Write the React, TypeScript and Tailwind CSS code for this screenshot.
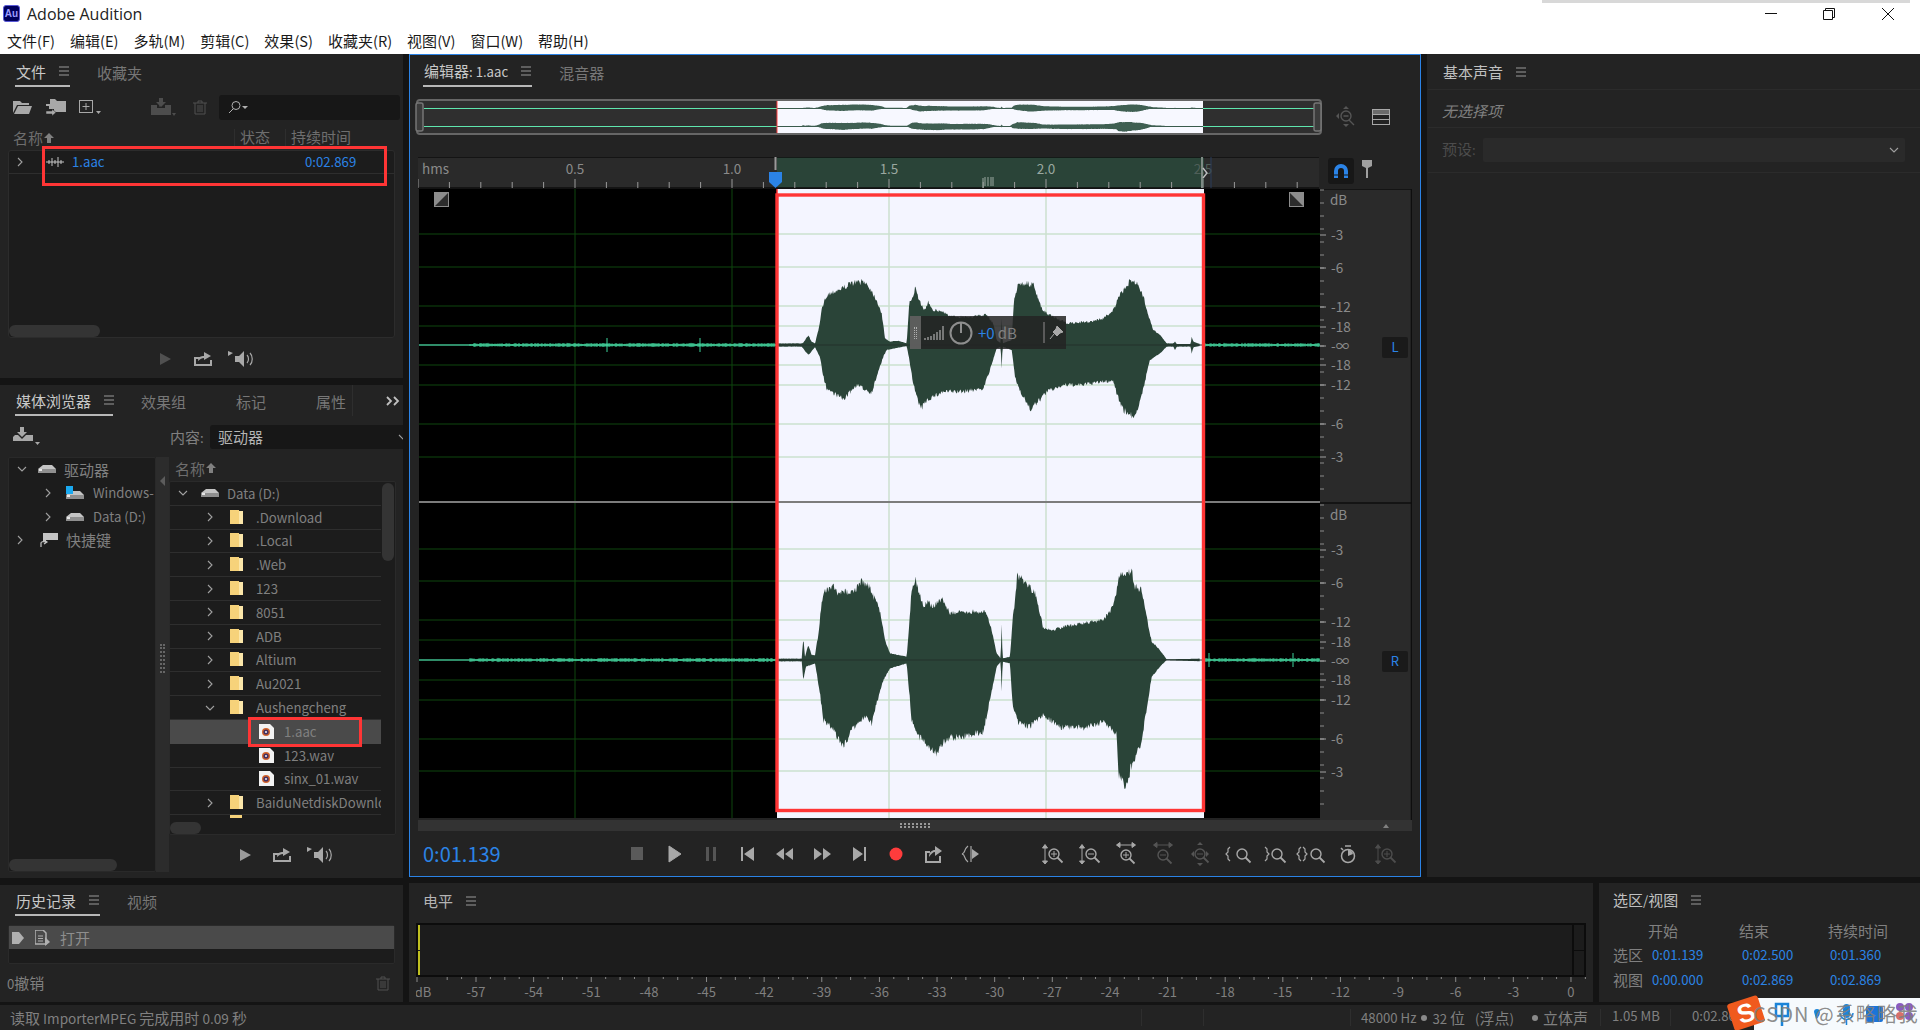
import type { ReactNode } from "react";

const BLUE = "text-[#2b83e6] text-[13.2px]";

// envelope points read off the screenshot: [x, y] in px of the zoomed crop
const ch1Top = [[25,250],[95,250],[100,248],[115,226],[125,245],[135,250],[148,200],[155,150],[170,105],[190,95],[215,85],[250,68],[285,65],[300,85],[320,120],[335,160],[345,235],[360,245],[385,242],[410,250],[418,130],[430,105],[437,80],[445,120],[465,150],[475,125],[490,150],[520,155],[540,170],[600,170],[650,165],[670,190],[680,240],[692,250],[695,175],[698,250],[725,240],[732,125],[745,70],[770,70],[790,75],[805,120],[820,155],[830,160],[890,190],[960,185],[1000,175],[1030,150],[1050,105],[1085,58],[1100,70],[1120,110],[1140,180],[1150,210],[1170,225],[1190,250],[1210,250],[1215,245],[1220,252],[1262,252],[1265,230],[1270,245],[1290,252]];
const ch1Bot = [[25,260],[95,260],[115,285],[135,262],[150,290],[160,350],[170,385],[220,418],[260,375],[305,398],[320,350],[340,290],[350,270],[410,258],[418,300],[430,370],[445,430],[455,445],[470,420],[520,395],[580,395],[640,385],[660,330],[680,265],[692,260],[695,325],[698,260],[725,270],[735,350],[745,380],[780,448],[800,430],[830,395],[880,375],[930,375],[1000,365],[1030,362],[1040,400],[1060,450],[1090,470],[1110,430],[1130,340],[1140,300],[1170,280],[1190,260],[1210,260],[1215,270],[1220,260],[1262,260],[1265,280],[1270,262],[1290,258]];
const ch2Top = [[25,296],[95,296],[100,235],[105,290],[115,255],[125,285],[135,285],[147,210],[155,120],[165,95],[190,80],[205,105],[220,95],[250,95],[275,65],[300,80],[310,110],[325,135],[335,180],[345,240],[360,280],[410,290],[418,190],[425,85],[437,55],[445,90],[460,140],[470,125],[490,140],[515,115],[540,160],[600,155],[645,155],[660,190],[680,280],[692,295],[695,195],[698,295],[720,290],[728,175],[735,125],[742,45],[770,70],[795,100],[810,160],[820,205],[850,210],[880,200],[940,190],[1000,180],[1030,140],[1050,40],[1085,35],[1095,80],[1115,90],[1130,170],[1145,245],[1170,270],[1190,298],[1290,296]];
const ch2Bot = [[25,304],[95,304],[100,360],[108,320],[135,310],[150,400],[160,480],[190,510],[220,560],[245,510],[290,465],[305,490],[320,430],[340,360],[360,325],[410,310],[418,400],[425,480],[445,530],[480,560],[500,580],[530,535],[580,530],[640,515],[660,420],[680,320],[692,305],[695,395],[698,305],[720,310],[728,440],[745,490],[780,500],[820,465],[870,500],[940,505],[1000,485],[1040,520],[1045,640],[1065,680],[1090,600],[1110,560],[1130,450],[1145,350],[1170,320],[1190,300],[1290,304]];

function at(env: number[][], x: number) {
  for (let i = 1; i < env.length; i++) {
    if (x <= env[i][0]) {
      const [x0, y0] = env[i - 1];
      const [x1, y1] = env[i];
      return y0 + ((y1 - y0) * (x - x0)) / (x1 - x0);
    }
  }
  return env[env.length - 1][1];
}

let seed = 7;
const rnd = () => {
  seed = (seed * 16807) % 2147483647;
  return seed / 2147483647;
};

// upper edge left to right, lower edge back, in screen px
function wavePath(top: number[][], bot: number[][], y0: number, mid: number, scale: number, dest: number) {
  const a: string[] = [];
  const b: string[] = [];
  for (let X = 25; X <= 1290; X += 2) {
    const x = 770 + X / 3;
    const t = y0 + at(top, X) / 3;
    const u = y0 + at(bot, X) / 3;
    const jt = (mid - t) * 0.1 * (rnd() - 0.5);
    const ju = (u - mid) * 0.1 * (rnd() - 0.5);
    a.push(`${x.toFixed(1)},${(dest + (t + jt - mid) * scale).toFixed(1)}`);
    b.unshift(`${x.toFixed(1)},${(dest + (u + ju - mid) * scale).toFixed(1)}`);
  }
  return "M" + a.concat(b).join("L") + "Z";
}

const wave1 = wavePath(ch1Top, ch1Bot, 260, 345, 1, 345);
const wave2 = wavePath(ch2Top, ch2Bot, 560, 660, 1, 660);
const over1 = wavePath(ch1Top, ch1Bot, 260, 345, 0.055, 108);
const over2 = wavePath(ch2Top, ch2Bot, 560, 660, 0.045, 126);

function noise(from: number, to: number, mid: number, spikes: number[]) {
  let d = "";
  for (let x = from; x < to; x++) {
    const h = x < 470 ? 0.3 : 0.6 + rnd() * 1.5;
    d += `M${x} ${(mid - h).toFixed(1)}V${(mid + h).toFixed(1)}`;
  }
  spikes.forEach((x) => {
    d += `M${x} ${mid - 7}V${mid + 7}`;
  });
  return d;
}

// the Latin glyphs of the CJK face run wide next to the 15px ideographs
function T({ s, size = "text-[13.2px]" }: { s: string; size?: string }) {
  return (
    <>
      {s.split(/([\x00-\x7f]+)/).map((part, i) =>
        i % 2 === 1 ? (
          <span key={i} className={size}>{part}</span>
        ) : (
          part
        )
      )}
    </>
  );
}

function Lines() {
  return (
    <svg viewBox="0 0 10 10" className="w-[10px] h-[10px] shrink-0">
      <path d="M0 1H10M0 5H10M0 9H10" stroke="#9a9a9a" strokeWidth="1.2" />
    </svg>
  );
}

function Tab({ label, active, w, children }: { label: string; active?: boolean; w?: string; children?: ReactNode }) {
  return (
    <div className={`h-[33px] pt-[3px] flex items-center gap-[13px] whitespace-nowrap ${active ? "border-b-2 border-[#b8b8b8] text-[#c8c8c8] px-[1px]" : "text-[#777777]"} ${w ?? ""}`}>
      <span><T s={label} /></span>
      {children}
    </div>
  );
}

function Chev({ down, className }: { down?: boolean; className?: string }) {
  return (
    <svg viewBox="0 0 10 10" className={`w-[10px] h-[10px] shrink-0 ${className ?? ""}`}>
      <path d={down ? "M1 3L5 7L9 3" : "M3 1L7 5L3 9"} fill="none" stroke="#a0a0a0" strokeWidth="1.1" />
    </svg>
  );
}

function Play({ dim }: { dim?: boolean }) {
  return (
    <svg viewBox="0 0 14 14" className="w-[14px] h-[14px]">
      <path d="M2 1L13 7L2 13Z" fill={dim ? "#505050" : "#9a9a9a"} />
    </svg>
  );
}

function LoopIcon() {
  return (
    <svg viewBox="0 0 20 16" className="w-[20px] h-[16px]">
      <path d="M1 6H7V8H3V13H17V9H19V15H1Z" fill="#a8a8a8" />
      <path d="M5 10C5 6 8 5 11 5V1L18 5L11 9V7C9 7 7 8 5 10Z" fill="#a8a8a8" />
    </svg>
  );
}

function SpeakerIcon() {
  return (
    <svg viewBox="0 0 26 18" className="w-[26px] h-[18px]">
      <path d="M0 1L5 3L0 6Z" fill="#a8a8a8" />
      <path d="M7 6H11L16 1V17L11 12H7Z" fill="#a8a8a8" />
      <path d="M19 5C21 7 21 11 19 13M22 3C25 6 25 12 22 15" fill="none" stroke="#a8a8a8" strokeWidth="1.2" />
    </svg>
  );
}

function Trash({ dim }: { dim?: boolean }) {
  const c = dim ? "#505050" : "#777777";
  return (
    <svg viewBox="0 0 14 15" className="w-[14px] h-[15px]">
      <path d="M0 3H14M5 3V1H9V3M2 3V14H12V3M5 5V12M7 5V12M9 5V12" fill="none" stroke={c} strokeWidth="1" />
    </svg>
  );
}

function Drive() {
  return (
    <svg viewBox="0 0 18 10" className="w-[18px] h-[10px] shrink-0">
      <path d="M5 1H14L18 5V8H0V5Z" fill="#c4c4c4" />
      <path d="M0 5H18V9H0Z" fill="#8f8f8f" />
      <rect x="1" y="5" width="3" height="2" fill="#e6e6e6" />
    </svg>
  );
}

function Folder() {
  return (
    <svg viewBox="0 0 14 15" className="w-[14px] h-[15px] shrink-0">
      <path d="M0 0H9L10 13L13 14H0Z" fill="#f6d27a" />
      <path d="M9 1H13V14H9Z" fill="#fbe6a9" />
    </svg>
  );
}

function AudioFile() {
  return (
    <svg viewBox="0 0 15 15" className="w-[15px] h-[15px] shrink-0">
      <path d="M0 0H11L15 4V15H0Z" fill="#f2f2f2" />
      <circle cx="7" cy="8" r="4" fill="#d2622a" />
      <circle cx="7" cy="8" r="2.6" fill="#433163" />
      <circle cx="7" cy="8" r="1" fill="#f2f2f2" />
    </svg>
  );
}

const browserRows = [
  { name: ".Download", kind: "folder" },
  { name: ".Local", kind: "folder" },
  { name: ".Web", kind: "folder" },
  { name: "123", kind: "folder" },
  { name: "8051", kind: "folder" },
  { name: "ADB", kind: "folder" },
  { name: "Altium", kind: "folder" },
  { name: "Au2021", kind: "folder" },
  { name: "Aushengcheng", kind: "open" },
  { name: "1.aac", kind: "file", selected: true },
  { name: "123.wav", kind: "file" },
  { name: "sinx_01.wav", kind: "file" },
  { name: "BaiduNetdiskDownload", kind: "folder" },
];

function FilesPanel() {
  return (
    <div className="relative h-[324px] bg-[#232323] flex flex-col">
      <div className="flex pl-[15px] gap-[27px]">
        <Tab label="文件" active><Lines /></Tab>
        <Tab label="收藏夹" />
      </div>
      <div className="h-[38px] pt-[2px] flex items-center pl-[13px] shrink-0">
        <svg viewBox="0 0 19 14" className="w-[19px] h-[14px]">
          <path d="M0 1H7L9 3H16V5H4L0 13ZM5 6H19L16 14H1Z" fill="#a8a8a8" />
        </svg>
        <svg viewBox="0 0 21 18" className="w-[21px] h-[18px] ml-[14px]">
          <path d="M4 1H9L11 3H20V14H8V11H3V8H0V6H4Z" fill="#a8a8a8" />
          <path d="M0 13H6V11L10 14.5L6 18V16H0Z" fill="#a8a8a8" stroke="#232323" strokeWidth="0.5" />
        </svg>
        <svg viewBox="0 0 22 16" className="w-[22px] h-[16px] ml-[12px]">
          <rect x="0.5" y="1.5" width="13" height="12" fill="none" stroke="#a8a8a8" />
          <path d="M7 4V11M3.5 7.5H10.5" stroke="#a8a8a8" />
          <path d="M17 12H22L19.5 15Z" fill="#a8a8a8" />
        </svg>
        <svg viewBox="0 0 25 18" className="w-[25px] h-[18px] ml-[50px]">
          <path d="M0 7H6V10H14V7H20V17H0Z M10 0V5H13L8 9" fill="#4d4d4d" />
          <path d="M8 0H12V4H15L10 9L5 4H8Z" fill="#4d4d4d" />
          <path d="M21 15H25L23 18Z" fill="#4d4d4d" />
        </svg>
        <div className="ml-[17px]"><Trash dim /></div>
        <div className="ml-[12px] w-[181px] h-[25px] bg-[#171717] rounded-[3px] flex items-center pl-[9px]">
          <svg viewBox="0 0 21 14" className="w-[21px] h-[14px]">
            <circle cx="8" cy="5.5" r="4" fill="none" stroke="#b0b0b0" />
            <path d="M5 9L1 13" stroke="#b0b0b0" />
            <path d="M14 6H20L17 9Z" fill="#b0b0b0" />
          </svg>
        </div>
      </div>
      <div className="h-[25px] mx-[8px] flex items-center text-[#6e6e6e] shrink-0">
        <div className="w-[226px] pl-[5px] flex items-center gap-[1px]">
          名称
          <svg viewBox="0 0 10 10" className="w-[10px] h-[10px]"><path d="M5 0L10 5H7V10H3V5H0Z" fill="#808080" /></svg>
        </div>
        <div className="w-[51px] h-[17px] pl-[5px] border-l border-[#2e2e2e]">状态</div>
        <div className="h-[17px] pl-[5px] border-l border-[#2e2e2e]">持续时间</div>
      </div>
      <div className="mx-[8px] h-[188px] bg-[#1c1c1c] border border-[#2c2c2c] rounded-[3px] flex flex-col shrink-0">
        <div className="h-[23px] flex items-center border-b border-[#2e2e2e] shrink-0">
          <Chev className="ml-[6px]" />
          <svg viewBox="0 0 18 10" className="w-[18px] h-[10px] ml-[21px]">
            <path d="M0 5H18M3 3V7M6 1V9M9 3V7M12 0V10M15 3V7" stroke="#c4c4c4" />
          </svg>
          <span className={`ml-[8px] w-[233px] ${BLUE}`}>1.aac</span>
          <span className={BLUE}>0:02.869</span>
        </div>
        <div className="mt-auto h-[12px] w-[91px] bg-[#343434] rounded-full" />
      </div>
      <div className="flex-1 pt-[1px] flex items-center">
        <div className="ml-[158px]"><Play dim /></div>
        <div className="ml-[21px]"><LoopIcon /></div>
        <div className="ml-[15px]"><SpeakerIcon /></div>
      </div>
      <div className="absolute left-[42px] top-[92px] w-[345px] h-[40px] border-[3px] border-[#ff3535]" />
    </div>
  );
}

function MediaPanel() {
  return (
    <div className="relative h-[493px] bg-[#232323] flex flex-col overflow-hidden">
      <div className="-mt-[2px] flex pl-[15px]">
        <Tab label="媒体浏览器" active w="w-[98px]"><Lines /></Tab>
        <Tab label="效果组" w="ml-[28px] w-[95px]" />
        <Tab label="标记" w="w-[80px]" />
        <Tab label="属性" w="w-[37px] border-r border-[#2e2e2e]" />
        <div className="h-[33px] pt-[3px] flex items-center ml-[33px]">
          <svg viewBox="0 0 14 10" className="w-[14px] h-[10px]">
            <path d="M1 1L5 5L1 9M8 1L12 5L8 9" fill="none" stroke="#c0c0c0" strokeWidth="1.8" />
          </svg>
        </div>
      </div>
      <div className="mt-[2px] h-[39px] pb-[2px] flex items-center pl-[13px] shrink-0">
        <svg viewBox="0 0 28 20" className="w-[28px] h-[20px] shrink-0">
          <path d="M7 0H11V5H14L9 10L4 5H7Z" fill="#a8a8a8" />
          <path d="M2 8H5L9 12L13 8H20V14H0V10Z" fill="#a8a8a8" />
          <path d="M22 15H27L24.5 18Z" fill="#a8a8a8" />
        </svg>
        <span className="ml-[129px] w-[33px] text-[#808080] whitespace-nowrap shrink-0"><T s="内容:" /></span>
        <div className="ml-[7px] w-[205px] h-[24px] bg-[#171717] rounded-[3px] flex items-center pl-[8px] text-[#b4b4b4] shrink-0">
          驱动器
          <Chev down className="ml-[135px]" />
        </div>
      </div>
      <div className="flex h-[415px]">
        <div className="ml-[8px] w-[148px] bg-[#1c1c1c] border border-[#292929] rounded-[2px] flex flex-col text-[#808080] shrink-0">
          <div className="h-[24px] pb-[2px] flex items-center">
            <Chev down className="ml-[8px]" />
            <div className="ml-[11px]"><Drive /></div>
            <span className="ml-[8px]">驱动器</span>
          </div>
          <div className="h-[24px] pb-[2px] flex items-center">
            <Chev className="ml-[34px]" />
            <div className="relative ml-[13px] w-[18px] h-[14px] flex items-end shrink-0">
              <Drive />
              <div className="absolute left-0 top-0 w-[7px] h-[8px] bg-[#1aa9f0]" />
            </div>
            <span className="ml-[9px] whitespace-nowrap overflow-hidden w-[61px] text-[13.2px]">Windows-SSD</span>
          </div>
          <div className="h-[24px] pb-[2px] flex items-center">
            <Chev className="ml-[34px]" />
            <div className="ml-[13px]"><Drive /></div>
            <span className="ml-[9px] text-[13.2px]">Data (D:)</span>
          </div>
          <div className="h-[22px] pb-[3px] flex items-center">
            <Chev className="ml-[6px]" />
            <svg viewBox="0 0 18 16" className="w-[18px] h-[16px] ml-[15px]">
              <path d="M3 1H18V8H6V9H3Z" fill="#c4c4c4" />
              <path d="M1 15V11C1 10 3 9 6 10M4 8L7 10L4 12" fill="none" stroke="#c4c4c4" strokeWidth="1.2" />
            </svg>
            <span className="ml-[8px]">快捷键</span>
          </div>
          <div className="mt-auto h-[12px] w-[108px] bg-[#343434] rounded-full" />
        </div>
        <div className="w-[13px] bg-[#2c2c2c] flex flex-col items-center shrink-0">
          <svg viewBox="0 0 6 10" className="w-[6px] h-[10px] mt-[19px]"><path d="M5 0V10L0 5Z" fill="#5c5c5c" /></svg>
          <div className="mt-[158px] w-[5px] h-[29px] border-x-2 border-dotted border-[#666666]" />
        </div>
        <div className="w-[227px] flex flex-col shrink-0">
          <div className="h-[24px] pl-[6px] pb-[2px] flex items-center gap-[1px] text-[#6e6e6e] shrink-0">
            名称
            <svg viewBox="0 0 10 10" className="w-[10px] h-[10px]"><path d="M5 0L10 5H7V10H3V5H0Z" fill="#808080" /></svg>
          </div>
          <div className="h-[354px] bg-[#1c1c1c] border border-[#2a2a2a] rounded-[2px] flex flex-col overflow-hidden shrink-0">
            <div className="flex h-[340px]">
              <div className="w-[211px] overflow-hidden text-[#808080] text-[13.2px] shrink-0">
                <div className="h-[23.8px] flex items-center border-b border-[#2e2e2e]">
                  <Chev down className="ml-[8px]" />
                  <div className="ml-[13px]"><Drive /></div>
                  <span className="ml-[8px]">Data (D:)</span>
                </div>
                {browserRows.map((r) => (
                  <div key={r.name} className={`h-[23.8px] flex items-center border-b whitespace-nowrap overflow-hidden ${r.selected ? "bg-[#4a4a4a] border-[#4a4a4a]" : "border-[#2e2e2e]"}`}>
                    {r.kind === "file" ? (
                      <div className="ml-[89px] mr-[10px]"><AudioFile /></div>
                    ) : (
                      <>
                        <Chev down={r.kind === "open"} className="ml-[35px]" />
                        <div className="ml-[15px] mr-[12px]"><Folder /></div>
                      </>
                    )}
                    <span>{r.name}</span>
                  </div>
                ))}
                <div className="ml-[60px] w-[12px] h-[3px] bg-[#f6d27a]" />
              </div>
              <div className="w-[14px] flex justify-center">
                <div className="mt-[1px] w-[12px] h-[78px] bg-[#343434] rounded-full" />
              </div>
            </div>
            <div className="mt-auto w-[31px] h-[12px] bg-[#343434] rounded-full" />
          </div>
          <div className="flex-1 pt-[3px] flex items-center">
            <div className="ml-[69px]"><Play /></div>
            <div className="ml-[20px]"><LoopIcon /></div>
            <div className="ml-[15px]"><SpeakerIcon /></div>
          </div>
        </div>
      </div>
      <div className="absolute left-[248px] top-[332px] w-[114px] h-[30px] border-[3px] border-[#ff3535]" />
    </div>
  );
}

function HistoryPanel() {
  return (
    <div className="h-[117px] bg-[#232323] flex flex-col overflow-hidden">
      <div className="-mt-[2px] flex pl-[15px] gap-[27px]">
        <Tab label="历史记录" active><Lines /></Tab>
        <Tab label="视频" />
      </div>
      <div className="mt-[9px] mx-[8px] h-[39px] bg-[#1c1c1c] border border-[#2a2a2a] rounded-[2px]">
        <div className="h-[23px] bg-[#4a4a4a] flex items-center text-[#8e8e8e]">
          <div className="ml-[3px]"><svg viewBox="0 0 12 12" className="w-[12px] h-[12px]"><path d="M0 0H7L12 6L7 12H0Z" fill="#b0b0b0" /></svg></div>
          <svg viewBox="0 0 15 16" className="w-[15px] h-[16px] ml-[11px]">
            <path d="M0 0H8L11 3V14H0Z" fill="none" stroke="#b0b0b0" strokeWidth="1.5" />
            <path d="M3 6H8M3 8.5H8M3 11H8" stroke="#b0b0b0" />
            <path d="M10 7L15 12L10 16Z" fill="#b0b0b0" />
          </svg>
          <span className="ml-[10px]">打开</span>
        </div>
      </div>
      <div className="flex-1 flex items-center justify-between pl-[7px] pr-[13px] text-[#808080]">
        <span><T s="0撤销" /></span>
        <Trash dim />
      </div>
    </div>
  );
}

function Overview() {
  return (
    <svg viewBox="415 99 907 36" className="w-[907px] h-[36px] shrink-0">
      <rect x="417" y="100" width="904" height="34" rx="3" fill="#2f2f2f" stroke="#666666" strokeWidth="2" />
      <rect x="777" y="101" width="426" height="32" fill="#f7f8ff" />
      <path d="M424 108.5H777M1203 108.5H1315M424 126.5H777M1203 126.5H1315" stroke="#5fe6ae" strokeWidth="1" />
      <path d="M777 108.5H1203M777 126.5H1203" stroke="#3a5a4c" strokeWidth="1" />
      <path d={over1} fill="#3f5f52" />
      <path d={over2} fill="#3f5f52" />
      <path d="M777 101V133" stroke="#ff4040" strokeWidth="1" />
      <rect x="416" y="103" width="7" height="28" rx="2" fill="#3c3c3c" stroke="#757575" strokeWidth="1.5" />
      <rect x="1314" y="103" width="7" height="28" rx="2" fill="#3c3c3c" stroke="#757575" strokeWidth="1.5" />
    </svg>
  );
}

function Ruler() {
  const ticks: ReactNode[] = [];
  for (let i = 0; i < 29; i++) {
    const x = 418 + i * 31.4;
    const big = i % 5 === 0;
    ticks.push(<path key={i} d={`M${x} ${big ? 179 : 182}V188`} stroke="#9a9a9a" strokeWidth="1" />);
  }
  const labels = [["0.5", 575], ["1.0", 732], ["1.5", 889], ["2.0", 1046]] as const;
  return (
    <svg viewBox="418 157 901 32" className="w-[901px] h-[32px] shrink-0">
      <rect x="418" y="157" width="901" height="31" fill="#2a2a2a" />
      <rect x="777" y="157" width="427" height="31" fill="#2a4438" />
      <path d="M418 157H1319M418 188H1319" stroke="#0e0e0e" strokeWidth="1.5" />
      {ticks}
      <text x="422" y="174" fontSize="13.5" fill="#8a8a8a">hms</text>
      {labels.map(([t, x]) => (
        <text key={t} x={x} y="174" fontSize="13.5" fill={x > 777 ? "#9aa8a0" : "#8a8a8a"} textAnchor="middle">{t}</text>
      ))}
      <text x="1203" y="174" fontSize="13.5" fill="#4f5f58" textAnchor="middle">2.5</text>
      <path d="M1211 157V188" stroke="#2a3c5a" strokeWidth="1" />
      <path d="M983 188V178M985 186V177M988 186V177M991 186V177M993 186V177" stroke="#9aa8a0" strokeWidth="1" />
      <path d="M775.5 157V170" stroke="#9a9a9a" strokeWidth="2" />
      <path d="M769 172H782V182L775.5 188L769 182Z" fill="#2b83e6" />
      <path d="M1202 157V188" stroke="#7e8a84" strokeWidth="2" />
      <path d="M1203 168L1207 173L1203 178" fill="none" stroke="#c0c0c0" strokeWidth="1.4" />
    </svg>
  );
}

function CornerMark({ x, flip }: { x: number; flip?: boolean }) {
  return (
    <g>
      <rect x={x} y="192" width="15" height="15" fill="#8c8c8c" />
      <path d={flip ? `M${x + 1} 193L${x + 14} 206H${x + 1}Z` : `M${x + 14} 193V206H${x + 1}Z`} fill="#2c2c2c" />
    </g>
  );
}

function WaveCanvas() {
  const rowsH = [234, 267, 306, 326, 365, 385, 424, 457, 549, 581, 620, 640, 680, 700, 739, 771];
  return (
    <svg viewBox="419 189 901 629" className="w-[901px] h-[629px] block">
      <rect x="419" y="189" width="901" height="629" fill="#000000" />
      <rect x="777" y="189" width="427" height="629" fill="#f4f5ff" />
      {rowsH.map((y) => (
        <g key={y}>
          <path d={`M419 ${y}H777M1204 ${y}H1320`} stroke="#0f460f" strokeWidth="1" />
          <path d={`M777 ${y}H1204`} stroke="#cbe0cf" strokeWidth="1.5" />
        </g>
      ))}
      <path d="M575 189V818M732 189V818" stroke="#0f460f" strokeWidth="1" />
      <path d="M889 189V818M1046 189V818" stroke="#cbe0cf" strokeWidth="1.5" />
      <path d={noise(419, 777, 345, [607, 700])} stroke="#3dd29a" strokeWidth="1" />
      <path d={noise(1204, 1320, 345, [])} stroke="#3dd29a" strokeWidth="1" />
      <path d={noise(419, 777, 660, [])} stroke="#3dd29a" strokeWidth="1" />
      <path d={noise(1204, 1320, 660, [1209, 1293])} stroke="#3dd29a" strokeWidth="1" />
      <path d="M419 345H777M1204 345H1320M419 660H777M1204 660H1320" stroke="#4fe0a8" strokeWidth="1" />
      <path d={wave1} fill="#2a4438" />
      <path d={wave2} fill="#2a4438" />
      <path d="M777 345H1204M777 660H1204" stroke="#22302a" strokeWidth="1" />
      <path d="M419 502H1320" stroke="#7c7c7c" strokeWidth="2" />
      <rect x="777" y="195" width="426.5" height="615.5" fill="none" stroke="#ff3535" strokeWidth="3.4" />
      <path d="M777 189V195" stroke="#ff3535" strokeWidth="1.5" />
      <CornerMark x={434} />
      <CornerMark x={1289} flip />
    </svg>
  );
}

function DbScale() {
  const ch = (mid: number, top: number) => {
    const labels: [string, number][] = [["-3", 111], ["-6", 78], ["-12", 39], ["-18", 19]];
    const ticks: number[] = [];
    for (let y = top; y < mid + 156; y += 13) ticks.push(y);
    return (
      <g key={mid}>
        <text x="1330" y={top + 15} fontSize="13.5" fill="#8a8a8a">dB</text>
        {ticks.map((y) => (
          <path key={y} d={`M1320 ${y}H1324`} stroke="#8a8a8a" strokeWidth="1" />
        ))}
        {labels.map(([t, d]) => (
          <g key={t}>
            <path d={`M1320 ${mid - d}H1326M1320 ${mid + d}H1326`} stroke="#a0a0a0" strokeWidth="1" />
            <text x="1331" y={mid - d + 5} fontSize="13.5" fill="#8a8a8a">{t}</text>
            <text x="1331" y={mid + d + 5} fontSize="13.5" fill="#8a8a8a">{t}</text>
          </g>
        ))}
        <path d={`M1320 ${mid}H1326`} stroke="#a0a0a0" strokeWidth="1" />
        <text x="1331" y={mid + 5} fontSize="13.5" fill="#8a8a8a">-∞</text>
      </g>
    );
  };
  return (
    <svg viewBox="1320 188 92 631" className="w-[92px] h-[631px] block">
      <rect x="1320" y="188" width="92" height="631" fill="#2a2a2a" />
      <path d="M1320 188H1412M1411.5 188V819" stroke="#0e0e0e" strokeWidth="1.5" />
      {ch(345, 189)}
      {ch(660, 504)}
      <path d="M1320 502H1412" stroke="#0e0e0e" strokeWidth="1.5" />
      <rect x="1382" y="336" width="26" height="21" rx="2" fill="#1a1a1a" />
      <text x="1395" y="351" fontSize="13" fill="#2b83e6" textAnchor="middle">L</text>
      <rect x="1382" y="650" width="26" height="21" rx="2" fill="#1a1a1a" />
      <text x="1395" y="665" fontSize="13" fill="#2b83e6" textAnchor="middle">R</text>
    </svg>
  );
}

function Hud() {
  return (
    <div className="absolute left-[491px] top-[127px] w-[156px] h-[33px] bg-[#232323]/85 flex items-center">
      <div className="w-[11px] h-full bg-[#666666]/85 flex items-center justify-center">
        <div className="w-[3px] h-[12px] border-x border-dotted border-[#b0b0b0]" />
      </div>
      <svg viewBox="0 0 20 14" className="w-[20px] h-[14px] ml-[3px]">
        <path d="M1 14V12M4 14V11M7 14V10M10 14V8M13 14V6M16 14V4M19 14V0" stroke="#9a9a9a" strokeWidth="1.4" />
      </svg>
      <svg viewBox="0 0 24 24" className="w-[24px] h-[24px] ml-[5px]">
        <circle cx="12" cy="12" r="10.5" fill="none" stroke="#8e8e8e" strokeWidth="2" />
        <path d="M12 2V12" stroke="#8e8e8e" strokeWidth="2" />
      </svg>
      <span className="ml-[5px] text-[#2b83e6]">+0</span>
      <span className="ml-[3px] text-[#808080]">dB</span>
      <div className="ml-[26px] w-[2px] h-[21px] bg-[#5a5a5a]" />
      <svg viewBox="0 0 14 14" className="w-[14px] h-[14px] ml-[4px]">
        <path d="M8 0L14 6L11 7L8 10L4 6L7 3ZM5 8L1 13" fill="#a8a8a8" stroke="#a8a8a8" />
      </svg>
    </div>
  );
}

function Tool({ on = "#a8a8a8", children }: { on?: string; children: ReactNode }) {
  return (
    <div className="w-[37px] h-[30px] flex items-center justify-center shrink-0">
      <svg viewBox="-10 -10 20 20" className="w-[20px] h-[20px]" fill={on} stroke={on}>
        {children}
      </svg>
    </div>
  );
}

function Mag({ kind, c = "#a8a8a8" }: { kind: string; c?: string }) {
  const v = <path d="M-7 -8V9M-9.5 -6L-7 -9.5L-4.5 -6ZM-9.5 7L-7 10L-4.5 7Z" fill={c} stroke={c} />;
  const h = <path d="M-9 -9H9M-6 -11.5L-9.5 -9L-6 -6.5ZM6 -11.5L9.5 -9L6 -6.5Z" fill={c} stroke={c} />;
  const plus = kind.includes("+");
  const minus = kind.includes("-");
  const offs: Record<string, number> = { v: 2, h: 0, x: 0, l: 5, r: 3, b: 5 };
  const cx = offs[kind[0]];
  const cy = kind[0] === "h" ? 1 : 0;
  return (
    <div className="w-[37px] h-[30px] flex items-center justify-center shrink-0">
      <svg viewBox="-16 -13 32 26" className="w-[32px] h-[26px]">
        {kind[0] === "v" && v}
        {kind[0] === "h" && h}
        {kind[0] === "x" && (
          <path d="M0 -12L-3 -9H3ZM0 12L-3 9H3ZM-9 0L-6 -3V3ZM9 0L6 -3V3Z" fill={c} />
        )}
        {kind[0] === "l" && (
          <path d="M-7 -7L-9 -5V-2L-11 0L-9 2V5L-7 7" fill="none" stroke={c} strokeWidth="1.2" />
        )}
        {kind[0] === "r" && (
          <path d="M-9 -7L-7 -5V-2L-5 0L-7 2V5L-9 7" fill="none" stroke={c} strokeWidth="1.2" />
        )}
        {kind[0] === "b" && (
          <path d="M-10 -7L-12 -5V-2L-14 0L-12 2V5L-10 7M-8 -7L-6 -5V-2L-4 0L-6 2V5L-8 7" fill="none" stroke={c} strokeWidth="1.2" />
        )}
        <circle cx={cx} cy={cy} r="5" fill="none" stroke={c} strokeWidth="1.4" />
        <path d={`M${cx + 3.5} ${cy + 3.5}L${cx + 8.5} ${cy + 8.5}`} stroke={c} strokeWidth="1.8" />
        {(plus || minus) && <path d={`M${cx - 3} ${cy}H${cx + 3}`} stroke={c} strokeWidth="1" />}
        {plus && <path d={`M${cx} ${cy - 3}V${cy + 3}`} stroke={c} strokeWidth="1" />}
      </svg>
    </div>
  );
}

function Transport() {
  return (
    <div className="h-[45px] flex items-center pl-[13px] shrink-0">
      <div className="w-[195px] text-[20px] text-[#2b83e6]">0:01.139</div>
      <Tool on="#5a5a5a"><rect x="-6" y="-7" width="12" height="13" stroke="none" /></Tool>
      <Tool><path d="M-5 -8L7 0L-5 8Z" /></Tool>
      <Tool on="#555555"><path d="M-5 -7H-2V7H-5ZM2 -7H5V7H2Z" stroke="none" /></Tool>
      <Tool><path d="M-7 -7H-5V7H-7ZM6 -7V7L-4 0Z" stroke="none" /></Tool>
      <Tool><path d="M-1 -6V6L-9 0ZM8 -6V6L0 0Z" stroke="none" /></Tool>
      <Tool><path d="M-8 -6V6L0 0ZM1 -6V6L9 0Z" stroke="none" /></Tool>
      <Tool><path d="M5 -7H7V7H5ZM-6 -7V7L4 0Z" stroke="none" /></Tool>
      <Tool on="#ff3c3c"><circle cx="0" cy="0" r="6.5" stroke="none" /></Tool>
      <Tool>
        <path d="M-8 -3H-3V-1H-6V7H6V2H8V9H-8Z" stroke="none" />
        <path d="M-4 3C-4 -2 -1 -4 2 -4V-8L9 -3L2 2V-2C0 -2 -2 0 -4 3Z" stroke="none" />
      </Tool>
      <Tool>
        <path d="M-2 -8C-7 -4 -4 -1 -8 0C-4 1 -7 4 -2 8M1 -8V8" fill="none" strokeWidth="1.2" />
        <path d="M2 -5L9 0L2 5Z" stroke="none" />
      </Tool>
      <div className="w-[45px] shrink-0" />
      <Mag kind="v+" />
      <Mag kind="v-" />
      <Mag kind="h+" />
      <Mag kind="h-" c="#555555" />
      <Mag kind="x-" c="#555555" />
      <Mag kind="l" />
      <Mag kind="r" />
      <Mag kind="b" />
      <Tool>
        <circle cx="0" cy="2" r="6.5" fill="none" strokeWidth="1.5" />
        <path d="M0 2V-4.5A6.5 6.5 0 0 1 5 0Z" stroke="none" />
        <path d="M-3 -8H3M-7 -6L-5 -4" fill="none" strokeWidth="1.6" />
      </Tool>
      <Mag kind="v+" c="#4d4d4d" />
    </div>
  );
}

function Editor() {
  return (
    <div className="w-[1012px] border border-[#2b83e6] bg-[#232323] flex flex-col shrink-0 overflow-hidden">
      <div className="-mt-[1px] flex pl-[13px] gap-[27px] shrink-0">
        <Tab label="编辑器: 1.aac" active><Lines /></Tab>
        <Tab label="混音器" />
      </div>
      <div className="mt-[12px] h-[36px] ml-[5px] flex items-center shrink-0">
        <Overview />
        <svg viewBox="0 0 22 22" className="w-[22px] h-[22px] ml-[13px]">
          <circle cx="11" cy="10" r="5" fill="none" stroke="#555555" strokeWidth="1.4" />
          <path d="M14 14L19 19M8.5 10H13.5" stroke="#555555" strokeWidth="1.4" />
          <path d="M11 0L8 3H14ZM11 21L8 18H14ZM1 10L4 7V13Z" fill="#555555" />
        </svg>
        <svg viewBox="0 0 18 16" className="w-[18px] h-[16px] ml-[15px]">
          <rect x="0.5" y="0.5" width="17" height="15" fill="none" stroke="#a8a8a8" />
          <path d="M0 5.5H18M0 10.5H18" stroke="#a8a8a8" />
          <rect x="1" y="1" width="16" height="4" fill="#6c6c6c" />
        </svg>
      </div>
      <div className="mt-[22px] h-[32px] ml-[8px] flex shrink-0">
        <Ruler />
        <div className="ml-[9px] mt-[1px] w-[26px] h-[26px] bg-[#171717] rounded-[3px] flex items-center justify-center">
          <svg viewBox="0 0 16 16" className="w-[16px] h-[16px]">
            <path d="M1 15V8A7 7 0 0 1 15 8V15H11V8A3 3 0 0 0 5 8V15Z" fill="#2b83e6" />
            <path d="M1 12H5M11 12H15" stroke="#171717" strokeWidth="1" />
          </svg>
        </div>
        <svg viewBox="0 0 10 18" className="w-[10px] h-[18px] ml-[8px] mt-[3px]">
          <path d="M0 0H10V6L6 8V18H4V8L0 6Z" fill="#a0a0a0" />
        </svg>
      </div>
      <div className="relative flex ml-[9px] h-[630px] shrink-0">
        <WaveCanvas />
        <DbScale />
        <Hud />
      </div>
      <div className="relative ml-[8px] w-[994px] h-[11px] mt-[1px] bg-[#333333] flex items-center justify-center shrink-0">
        <div className="w-[30px] h-[5px] border-y-2 border-dotted border-[#999999]" />
        <div className="absolute right-[23px] top-[4px] w-0 h-0 border-x-[3px] border-b-[4px] border-x-transparent border-b-[#808080]" />
      </div>
      <Transport />
    </div>
  );
}

function BasicSound() {
  return (
    <div className="flex-1 bg-[#232323] pl-[1px] flex flex-col">
      <div className="h-[36px] pl-[15px] flex items-center gap-[13px] text-[#c0c0c0] border-b border-[#2b2b2b]">
        基本声音 <Lines />
      </div>
      <div className="h-[38px] pl-[14px] pt-[3px] flex items-center italic text-[#808080] border-b border-[#2b2b2b]">无选择项</div>
      <div className="h-[45px] pl-[14px] pr-[15px] flex items-center text-[#4c4c4c] border-b border-[#2b2b2b]">
        <span className="w-[41px] pb-[3px]"><T s="预设:" /></span>
        <div className="flex-1 h-[24px] bg-[#2a2a2a] rounded-[2px] flex items-center justify-end pr-[6px]">
          <Chev down />
        </div>
      </div>
    </div>
  );
}

function LevelPanel() {
  const marks: ReactNode[] = [];
  const vals = [-57, -54, -51, -48, -45, -42, -39, -36, -33, -30, -27, -24, -21, -18, -15, -12, -9, -6, -3, 0];
  vals.forEach((v, i) => {
    const x = 476 + i * 57.63;
    marks.push(
      <g key={v}>
        <path d={`M${x} 977V982M${x - 28.8} 977V980M${x - 14.4} 977V979M${x + 14.4} 977V979`} stroke="#8a8a8a" strokeWidth="1" />
        <text x={x} y="997" fontSize="13" fill="#808080" textAnchor="middle">{v}</text>
      </g>
    );
  });
  return (
    <div className="w-[1184px] bg-[#232323] shrink-0 flex flex-col">
      <div className="h-[35px] mb-[5px] pl-[14px] flex items-center gap-[13px] text-[#b4b4b4]">
        电平 <Lines />
      </div>
      <div className="ml-[7px] w-[1170px] h-[54px] border-2 border-[#0c0c0c] bg-[#1c1c1c] flex shrink-0">
        <div className="w-[2px] flex flex-col gap-[1px]">
          <div className="flex-1 bg-[#c0c020]" />
          <div className="flex-1 bg-[#c0c020]" />
        </div>
        <div className="flex-1" />
        <div className="w-[12px] border-l-2 border-[#0c0c0c] flex flex-col">
          <div className="flex-1 border-b border-[#0c0c0c]" />
          <div className="flex-1" />
        </div>
      </div>
      <svg viewBox="416 977 1177 25" className="w-[1177px] h-[25px] ml-[7px]">
        <text x="423" y="997" fontSize="13" fill="#808080" textAnchor="middle">dB</text>
        <path d="M417 977V982" stroke="#8a8a8a" strokeWidth="1" />
        {marks}
      </svg>
    </div>
  );
}

function SelectionPanel() {
  const rows = [
    ["选区", "0:01.139", "0:02.500", "0:01.360"],
    ["视图", "0:00.000", "0:02.869", "0:02.869"],
  ];
  return (
    <div className="flex-1 bg-[#232323] pl-[14px] flex flex-col">
      <div className="h-[34px] mb-[1px] flex items-center gap-[13px] text-[#c0c0c0]">
        <span><T s="选区/视图" /></span> <Lines />
      </div>
      <div className="flex h-[24px] items-center text-[#808080]">
        <span className="w-[35px]" />
        <span className="w-[91px]">开始</span>
        <span className="w-[89px]">结束</span>
        <span>持续时间</span>
      </div>
      {rows.map((r) => (
        <div key={r[0]} className="flex h-[25px] items-center">
          <span className="w-[39px] text-[#808080]">{r[0]}</span>
          <span className={`w-[90px] ${BLUE}`}>{r[1]}</span>
          <span className={`w-[88px] ${BLUE}`}>{r[2]}</span>
          <span className={BLUE}>{r[3]}</span>
        </div>
      ))}
    </div>
  );
}

function Watermark() {
  return (
    <div className="absolute right-0 bottom-0 w-[192px] h-[32px]">
      <div className="absolute left-[26px] top-0 right-0 h-full bg-[#f6fafd]" />
      <div className="absolute left-[2px] top-[1px] w-[32px] h-[28px] bg-[#f05a1e] rounded-[3px] -rotate-[18deg] flex items-center justify-center text-white text-[26px] font-bold font-['Liberation_Sans',sans-serif]">
        S
      </div>
      <svg viewBox="0 0 150 30" className="absolute left-[40px] top-0 w-[150px] h-[30px]">
        <path d="M8 6H20V18H8ZM14 6V28" fill="none" stroke="#1b84d8" strokeWidth="2.5" />
        <path d="M46 14a3 3 0 1 1 6 0q0 5 -4 7" fill="#1b84d8" />
        <rect x="75" y="6" width="7" height="14" rx="3.5" fill="#1b84d8" />
        <path d="M72 15a6.5 6.5 0 0 0 13 0M78.5 22V27" fill="none" stroke="#1b84d8" strokeWidth="1.5" />
        <rect x="98" y="8" width="17" height="16" rx="2" fill="#1b74d8" />
        <circle cx="132" cy="9" r="4" fill="#8a5cc0" />
        <circle cx="141" cy="9" r="4" fill="#8a5cc0" />
        <circle cx="132" cy="18" r="4" fill="#d8706a" />
        <circle cx="141" cy="18" r="4" fill="#8a5cc0" />
      </svg>
      <span className="absolute left-[25px] top-[6px] text-[20px] tracking-[1px] text-[#7f7f7f]/90 whitespace-nowrap">CSDN @系略略我</span>
    </div>
  );
}

function StatusBar() {
  return (
    <div className="relative h-[25px] bg-[#232323] flex items-center text-[#808080] shrink-0 whitespace-nowrap">
      <div className="w-[1141px] pl-[10px]"><T s="读取 ImporterMPEG 完成用时 0.09 秒" size="text-[13.6px]" /></div>
      <div className="w-[62px] h-[17px] border-l border-[#2e2e2e]" />
      <div className="w-[147px] h-[17px] border-l border-[#2e2e2e]" />
      <div className="w-[250px] h-[17px] border-l border-[#2e2e2e] pl-[10px] flex items-center gap-[5px]">
        <span className="text-[13.2px]">48000 Hz</span>
        <span className="w-[6px] h-[6px] rounded-full bg-[#8a8a8a]" />
        <span><T s="32 位" /></span>
        <span className="ml-[5px]"><T s="(浮点)" /></span>
        <span className="w-[6px] h-[6px] rounded-full bg-[#8a8a8a] ml-[13px]" />
        <span>立体声</span>
      </div>
      <div className="w-[70px] h-[17px] border-l border-[#2e2e2e] pl-[11px] text-[13.2px]">1.05 MB</div>
      <div className="h-[17px] border-l border-[#2e2e2e] pl-[21px] text-[13.2px]">0:02.869</div>
      <Watermark />
    </div>
  );
}

const menus = ["文件(F)", "编辑(E)", "多轨(M)", "剪辑(C)", "效果(S)", "收藏夹(R)", "视图(V)", "窗口(W)", "帮助(H)"];

export default function App() {
  return (
    <div className="w-[1920px] h-[1030px] overflow-hidden bg-[#141414] flex flex-col text-[15px] leading-none font-['Noto_Sans_CJK_SC',sans-serif]">
      <div className="relative h-[27px] bg-white flex items-center shrink-0">
        <div className="ml-[3px] w-[17px] h-[17px] bg-[#00005b] border border-[#5a5ad8] rounded-[3px] flex items-center justify-center text-[#9d9dff] text-[10px] font-bold font-['Liberation_Sans',sans-serif]">
          Au
        </div>
        <span className="ml-[7px] text-[16px] text-[#222222] font-['Open_Sans',sans-serif]">Adobe Audition</span>
        <div className="absolute left-[1542px] top-0 w-[368px] h-[3px] bg-[#d8d8d8]" />
        <div className="ml-auto flex items-center">
          <svg viewBox="0 0 12 12" className="w-[12px] h-[12px] mr-[46px]"><path d="M0 5.5H12" stroke="#111111" /></svg>
          <svg viewBox="0 0 12 12" className="w-[12px] h-[12px] mr-[47px]"><path d="M0.5 2.5H9.5V11.5H0.5ZM2.5 2.5V0.5H11.5V9.5H9.5" fill="none" stroke="#111111" /></svg>
          <svg viewBox="0 0 12 12" className="w-[12px] h-[12px] mr-[26px]"><path d="M0 0L12 12M12 0L0 12" stroke="#111111" /></svg>
        </div>
      </div>
      <div className="h-[27px] bg-white flex items-center pl-[7px] gap-[15px] text-[#1a1a1a] shrink-0">
        {menus.map((m) => (
          <span key={m}><T s={m} size="text-[14.6px]" /></span>
        ))}
      </div>
      <div className="h-[948px] flex gap-[6px] shrink-0">
        <div className="w-[403px] flex flex-col gap-[7px] shrink-0">
          <FilesPanel />
          <MediaPanel />
          <HistoryPanel />
        </div>
        <div className="flex-1 flex flex-col gap-[6px]">
          <div className="h-[823px] flex gap-[6px] shrink-0">
            <Editor />
            <BasicSound />
          </div>
          <div className="h-[119px] flex gap-[6px] shrink-0">
            <LevelPanel />
            <SelectionPanel />
          </div>
        </div>
      </div>
      <div className="h-[3px] shrink-0" />
      <StatusBar />
    </div>
  );
}
